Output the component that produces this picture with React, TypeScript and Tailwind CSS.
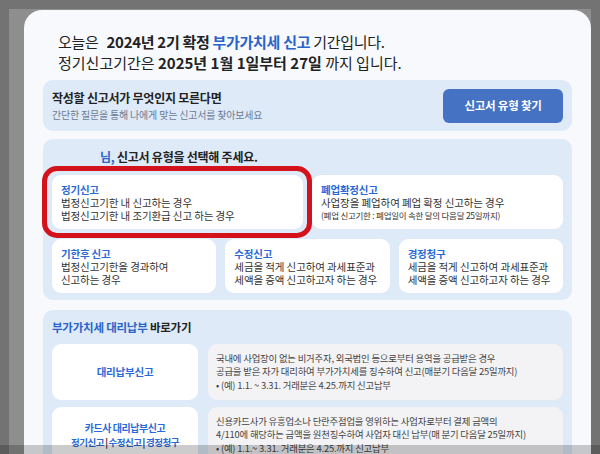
const font = "font-['Noto_Sans_CJK_KR','Noto_Sans',sans-serif]";

const topCards = [
  {
    title: "정기신고",
    lines: ["법정신고기한 내 신고하는 경우", "법정신고기한 내 조기환급 신고 하는 경우"],
    note: "",
    picked: true,
  },
  {
    title: "폐업확정신고",
    lines: ["사업장을 폐업하여 폐업 확정 신고하는 경우"],
    note: "(폐업 신고기한 : 폐업일이 속한 달의 다음달 25일까지)",
    picked: false,
  },
];

const lowCards = [
  { title: "기한후 신고", lines: ["법정신고기한을 경과하여", "신고하는 경우"] },
  { title: "수정신고", lines: ["세금을 적게 신고하여 과세표준과", "세액을 증액 신고하고자 하는 경우"] },
  { title: "경정청구", lines: ["세금을 적게 신고하여 과세표준과", "세액을 증액 신고하고자 하는 경우"] },
];

const TypeCard = ({ title, lines, note, picked }: { title: string; lines: string[]; note?: string; picked?: boolean }) => (
  <div className="relative h-[54px] rounded-[9px] bg-white px-[9px] flex flex-col justify-center">
    {picked && (
      <div className="absolute -left-[10px] -right-[9px] -top-[9px] -bottom-[9px] rounded-[15px] border-[5px] border-[#d3121b]" />
    )}
    <div className="text-[10.5px] leading-[13px] font-bold text-[#2b6ad6] tracking-[-0.02em]">{title}</div>
    {lines.map((l) => (
      <div key={l} className="text-[10.5px] leading-[13px] text-[#333] tracking-[-0.01em]">
        {l}
      </div>
    ))}
    {note && <div className="text-[8.5px] leading-[13px] text-[#333] tracking-[-0.03em]">{note}</div>}
  </div>
);

export default function App() {
  return (
    <div className={`relative w-[600px] h-[454px] overflow-hidden bg-[#737373] pt-[9px] px-[9px] ${font}`}>
      <div className="h-full bg-[#8e8e8e] pt-[1px] pl-[15px]">
        <div className="h-full rounded-t-[18px] bg-[#f7f9fd] px-[19px] pt-[21px]">
          {/* header */}
          <div className="pl-[15px] text-[15px] leading-[21px] text-[#222]">
            <p className="tracking-[-0.02em]">
              오늘은 <b className="ml-[5px]">2024년 2기 확정</b> <b className="text-[#2a63c9]">부가가치세 신고</b> 기간입니다.
            </p>
            <p>
              정기신고기간은 <b>2025년 1월 1일부터 27일</b> 까지 입니다.
            </p>
          </div>

          {/* finder */}
          <div className="mt-[7px] h-[51px] rounded-[10px] bg-[#deeaf7] px-[9px] flex items-center justify-between">
            <div>
              <div className="text-[12px] leading-[16px] font-bold text-[#222] tracking-[-0.02em]">
                작성할 신고서가 무엇인지 모른다면
              </div>
              <div className="mt-[3px] text-[10px] leading-[12px] text-[#6c7a94] tracking-[-0.02em]">
                간단한 질문을 통해 나에게 맞는 신고서를 찾아보세요
              </div>
            </div>
            <button className="w-[120px] h-[34px] rounded-[6px] bg-[#4672c4] text-white text-[11.5px] font-bold tracking-[-0.02em]">
              신고서 유형 찾기
            </button>
          </div>

          {/* type select */}
          <div className="mt-[8px] rounded-[10px] bg-[#deeaf7] px-[9px] pb-[7px]">
            <div className="h-[36px] pl-[48px] flex items-center text-[12px] font-bold text-[#222] tracking-[-0.02em]">
              <span className="text-[#2a63c9]">님,</span>&nbsp;신고서 유형을 선택해 주세요.
            </div>
            <div className="grid grid-cols-2 gap-[9px]">
              {topCards.map((c) => (
                <TypeCard key={c.title} {...c} />
              ))}
            </div>
            <div className="mt-[10px] grid grid-cols-3 gap-[9px]">
              {lowCards.map((c) => (
                <TypeCard key={c.title} {...c} />
              ))}
            </div>
          </div>

          {/* proxy payment */}
          <div className="mt-[10px] rounded-[10px] bg-[#deeaf7] px-[9px] pt-[9px] pb-[10px]">
            <div className="text-[11.5px] leading-[16px] font-bold text-[#222] tracking-[-0.02em]">
              <span className="text-[#2a63c9]">부가가치세 대리납부</span> 바로가기
            </div>
            <div className="mt-[9px] grid grid-cols-[146px_1fr] gap-x-[10px] gap-y-[7px]">
              <div className="h-[56px] rounded-[9px] bg-white flex items-center justify-center text-[10.5px] font-bold text-[#2b6ad6] tracking-[-0.02em]">
                대리납부신고
              </div>
              <div className="h-[56px] rounded-[9px] bg-[#f3f3f5] pl-[8px] flex flex-col justify-center text-[9.4px] leading-[13.5px] text-[#444] tracking-[-0.02em]">
                <div>국내에 사업장이 없는 비거주자, 외국법인 등으로부터 용역을 공급받은 경우</div>
                <div>공급을 받은 자가 대리하여 부가가치세를 징수하여 신고(매분기 다음달 25일까지)</div>
                <div>• (예) 1.1. ~ 3.31. 거래분은 4.25.까지 신고납부</div>
              </div>
              <div className="h-[56px] rounded-[9px] bg-white flex flex-col items-center justify-center leading-[15px] font-bold text-[#2b6ad6] tracking-[-0.03em]">
                <div className="text-[10px]">카드사 대리납부신고</div>
                <div className="text-[9.5px] tracking-[-0.05em]">
                  정기신고<span className="text-[#223] px-[1px]">|</span>수정신고<span className="text-[#223] px-[1px]">|</span>경정청구
                </div>
              </div>
              <div className="h-[56px] rounded-[9px] bg-[#f3f3f5] pl-[8px] flex flex-col justify-center text-[9.4px] leading-[13.5px] text-[#444] tracking-[-0.02em]">
                <div>신용카드사가 유흥업소나 단란주점업을 영위하는 사업자로부터 결제 금액의</div>
                <div>4/110에 해당하는 금액을 원천징수하여 사업자 대신 납부(매 분기 다음달 25일까지)</div>
                <div>• (예) 1.1.~ 3.31. 거래분은 4.25.까지 신고납부</div>
              </div>
            </div>
          </div>
        </div>
      </div>
      <div className="absolute left-0 right-0 bottom-0 h-[9px] bg-black/20" />
    </div>
  );
}
